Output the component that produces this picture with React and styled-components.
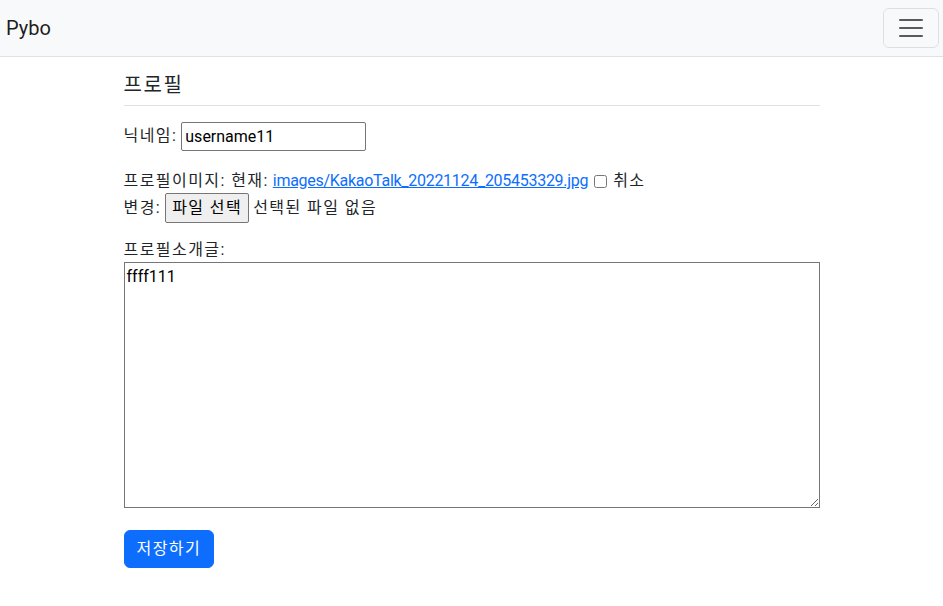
import React from 'react'
import styled, { createGlobalStyle } from 'styled-components'

const GlobalStyle = createGlobalStyle`
  * { box-sizing: border-box; }
  body {
    margin: 0;
    font-family: Roboto, "Noto Sans CJK KR", sans-serif;
    font-size: 16px;
    line-height: 1.5;
    color: #212529;
    background: #fff;
  }
`

const Navbar = styled.nav`
  height: 57px;
  display: flex;
  align-items: center;
  justify-content: space-between;
  padding: 0 4px 0 6px;
  background: #f8f9fa;
  border-bottom: 1px solid #dee2e6;
`

const Brand = styled.a`
  font-size: 20px;
  color: rgba(0, 0, 0, 0.9);
  text-decoration: none;
  line-height: 30px;
`

const Toggler = styled.button`
  width: 56px;
  height: 40px;
  display: flex;
  align-items: center;
  justify-content: center;
  background: transparent;
  border: 1px solid rgba(0, 0, 0, 0.1);
  border-radius: 6px;
  padding: 0;
  margin-top: -1px;
`

// Korean glyphs run a bit narrower here than in the reference font
const Ko = styled.span`
  letter-spacing: 0.09em;
`

const Container = styled.main`
  width: 696px;
  margin: 0 auto;
`

const Heading = styled.h5`
  margin: 0;
  padding: 16px 0 8px;
  font-size: 20px;
  font-weight: 400;
  line-height: 24px;
  letter-spacing: 0.08em;
  border-bottom: 1px solid #dee2e6;
`

const Row = styled.div`
  display: flex;
  align-items: center;
  gap: ${p => p.$gap || 4}px;
  margin-top: ${p => p.$mt || 0}px;
  min-height: ${p => p.$h || 24}px;
`

const TextInput = styled.input`
  width: 185px;
  height: 29px;
  padding: 1px 3px;
  font: inherit;
  border: 1px solid #767676;
  border-radius: 2px;
  color: #000;
`

const FileLink = styled.a`
  color: #0d6efd;
  text-decoration: underline;
  letter-spacing: -0.28px;
`

const Check = styled.input`
  width: 13px;
  height: 13px;
  margin: 0 2px 0 2px;
`

const FileButton = styled.span`
  display: inline-flex;
  align-items: center;
  height: 30px;
  padding: 0 6px;
  background: #efefef;
  border: 1px solid #767676;
  border-radius: 2px;
  color: #000;
  letter-spacing: 0.09em;
`

const Label = styled.label`
  display: block;
  margin-top: 15px;
  letter-spacing: 0.09em;
`

const TextArea = styled.textarea`
  display: block;
  width: 696px;
  height: 246px;
  padding: 2px 2px;
  font: inherit;
  color: #000;
  border: 1px solid #767676;
  border-radius: 0;
  resize: both;
`

const SubmitButton = styled.button`
  margin-top: 22px;
  height: 38px;
  padding: 0 12px;
  font: inherit;
  letter-spacing: 0.09em;
  color: #fff;
  background: #0d6efd;
  border: 1px solid #0d6efd;
  border-radius: 6px;
`

const MenuIcon = () => (
  <svg width="30" height="30" viewBox="0 0 30 30">
    <path
      d="M4 7h22M4 15h22M4 23h22"
      stroke="rgba(33,37,41,0.75)"
      strokeWidth="2"
      strokeLinecap="round"
    />
  </svg>
)

export default function App() {
  return (
    <>
      <GlobalStyle />
      <Navbar>
        <Brand href="#">Pybo</Brand>
        <Toggler aria-label="menu">
          <MenuIcon />
        </Toggler>
      </Navbar>
      <Container>
        <Heading>프로필</Heading>
        <Row $mt={15} $h={30}>
          <Ko>닉네임:</Ko>
          <TextInput defaultValue="username11" />
        </Row>
        <Row $mt={18}>
          <span>
            <Ko>프로필이미지: 현재:</Ko>{' '}
            <FileLink href="#">images/KakaoTalk_20221124_205453329.jpg</FileLink>
          </span>
          <Check type="checkbox" />
          <Ko>취소</Ko>
        </Row>
        <Row $h={30}>
          <Ko>변경:</Ko>
          <FileButton>파일 선택</FileButton>
          <Ko>선택된 파일 없음</Ko>
        </Row>
        <Label>프로필소개글:</Label>
        <TextArea defaultValue="ffff111" />
        <SubmitButton>저장하기</SubmitButton>
      </Container>
    </>
  )
}
